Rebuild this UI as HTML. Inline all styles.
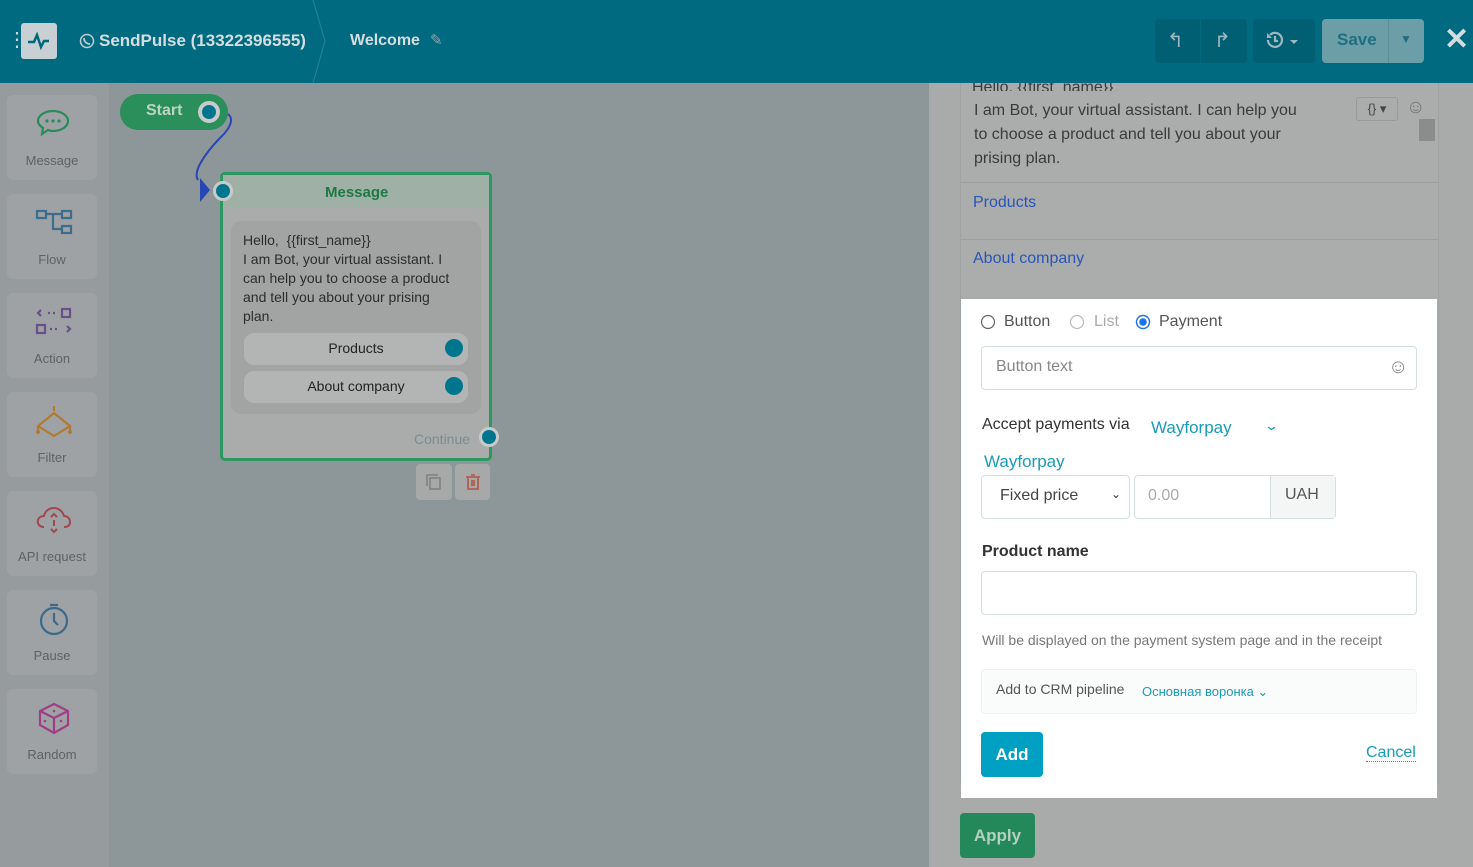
<!DOCTYPE html>
<html><head><meta charset="utf-8"><style>
*{box-sizing:border-box;margin:0;padding:0}
body{width:1473px;height:867px;overflow:hidden;font-family:"Liberation Sans",sans-serif;background:#8d9698;position:relative}
.hdr{position:absolute;left:0;top:0;width:1473px;height:83px;background:#006b80;color:#d6dfe2}
.abs{position:absolute}
.side{position:absolute;left:0;top:83px;width:109px;height:784px;background:#969b9e}
.card{position:absolute;left:7px;width:90px;height:85px;background:#9ea2a4;border-radius:6px;text-align:center;font-size:13px;color:#5d6365}
.card span{position:absolute;left:0;right:0;bottom:12px}
.card svg{position:absolute;left:27px;top:12px}
.rp{position:absolute;left:929px;top:83px;width:544px;height:784px;background:#a9abaa}
.node{position:absolute;left:220px;top:172px;width:272px;height:289px;border:3px solid #2a9860;border-radius:5px;background:#a9acab}
.dot{position:absolute;width:16px;height:16px;border-radius:50%;background:#00768e;border:3px solid #c8cbca}
.pill{position:absolute;left:244px;width:224px;height:32px;background:#b3b5b4;border-radius:10px;text-align:center;line-height:30px;font-size:14px;color:#222}
.white{position:absolute;left:961px;top:299px;width:476px;height:499px;background:#fff}
.inp{position:absolute;border:1px solid #d3dfe0;border-radius:4px;background:#fff}
.t{position:absolute;white-space:nowrap}
</style></head><body>
<div class="hdr">
 <div class="t" style="left:7px;top:30px;font-size:20px;line-height:20px;color:#cfd8db">⋮</div>
 <div class="abs" style="left:21px;top:23px;width:36px;height:36px;background:#c8d0d3;border-radius:3px">
  <svg width="36" height="36"><path d="M7 19h6l3-7 4 12 3-6h5" fill="none" stroke="#00687c" stroke-width="2.5"/></svg></div>
 <svg class="abs" style="left:79px;top:33px" width="16" height="16"><circle cx="8" cy="8" r="6.5" fill="none" stroke="#c2ccd0" stroke-width="1.5"/><path d="M5 5c0 4 3 6 6 6" stroke="#c2ccd0" stroke-width="1.8" fill="none"/></svg>
 <div class="t" style="left:99px;top:31px;font-size:17px;font-weight:bold;color:#d4dde0">SendPulse (13322396555)</div>
 <svg class="abs" style="left:310px;top:0" width="20" height="83"><path d="M3 0L15 41L3 83" fill="none" stroke="#2a8294" stroke-width="1"/></svg>
 <div class="t" style="left:350px;top:32px;font-size:16px;font-weight:bold;color:#d4dde0">Welcome</div>
 <div class="t" style="left:430px;top:31px;font-size:15px;color:#8aa8b0">✎</div>
 <div class="abs" style="left:1155px;top:19px;width:92px;height:44px;background:#005f72;border-radius:4px"></div>
 <div class="abs" style="left:1200px;top:19px;width:1px;height:44px;background:#006b80"></div>
 <div class="t" style="left:1167px;top:28px;font-size:20px;color:#9fb8bf">↰</div>
 <div class="t" style="left:1214px;top:28px;font-size:20px;color:#9fb8bf">↱</div>
 <div class="abs" style="left:1253px;top:19px;width:62px;height:44px;background:#005f72;border-radius:4px"></div>
 <svg class="abs" style="left:1264px;top:30px" width="40" height="20"><g fill="none" stroke="#9fb8bf" stroke-width="2.2"><path d="M4 10a7 7 0 1 0 2-5"/><path d="M11 6v5h3"/></g><path d="M3 3v5h5z" fill="#9fb8bf"/><path d="M26 10h8l-4 4z" fill="#9fb8bf"/></svg>
 <div class="abs" style="left:1322px;top:19px;width:102px;height:44px;background:#6c9ea8;border-radius:4px"></div>
 <div class="abs" style="left:1388px;top:19px;width:1px;height:44px;background:#5c8e98"></div>
 <div class="t" style="left:1337px;top:30px;font-size:17px;color:#1f6f80;font-weight:bold">Save</div>
 <div class="t" style="left:1400px;top:32px;font-size:12px;color:#1f6f80">▼</div>
 <div class="t" style="left:1444px;top:22px;font-size:30px;font-weight:bold;color:#d4dde0">✕</div>
</div>
<div class="side">
 <div class="card" style="top:12px"><svg width="38" height="34"><path d="M19 4c9 0 15 5 15 10s-6 10-15 10c-2 0-3 0-5-1l-6 4 1-6c-3-2-5-4-5-7 0-5 6-10 15-10z" fill="none" stroke="#2a8a5a" stroke-width="2.2"/><circle cx="13" cy="14" r="1.6" fill="#2a8a5a"/><circle cx="19" cy="14" r="1.6" fill="#2a8a5a"/><circle cx="25" cy="14" r="1.6" fill="#2a8a5a"/></svg><span>Message</span></div>
 <div class="card" style="top:111px"><svg width="40" height="34"><g fill="none" stroke="#3d6d8c" stroke-width="2.2"><rect x="3" y="5" width="9" height="7"/><rect x="28" y="5" width="9" height="7"/><rect x="28" y="20" width="9" height="7"/><path d="M12 8h16M19 8v15h9"/></g></svg><span>Flow</span></div>
 <div class="card" style="top:210px"><svg width="40" height="34"><g fill="none" stroke="#6b4f8a" stroke-width="2.2"><rect x="28" y="4" width="8" height="8"/><rect x="3" y="20" width="8" height="8"/><path d="M7 5l-3 3 3 3M33 21l3 3-3 3M14 8h2M19 8h2M16 24h2M21 24h2"/></g></svg><span>Action</span></div>
 <div class="card" style="top:309px"><svg width="40" height="34"><g fill="none" stroke="#b07a35" stroke-width="2.2"><path d="M20 2v5M4 22l16-13 16 13-16 10zM4 22v5M36 22v5"/></g><circle cx="4" cy="28" r="2" fill="#b07a35"/><circle cx="36" cy="28" r="2" fill="#b07a35"/></svg><span>Filter</span></div>
 <div class="card" style="top:408px"><svg width="40" height="34"><g fill="none" stroke="#a0484e" stroke-width="2"><path d="M10 24c-5 0-7-4-6-7 1-3 4-4 6-4 1-5 5-8 10-8s9 4 10 8c3 0 6 2 6 6s-3 5-6 5"/><path d="M17 14l3-3 3 3M17 26l3 3 3-3M20 17v6"/></g></svg><span>API request</span></div>
 <div class="card" style="top:507px"><svg width="40" height="34"><g fill="none" stroke="#3d6a8a" stroke-width="2.2"><circle cx="20" cy="19" r="13"/><path d="M16 3h8M20 11v8l4 4"/></g></svg><span>Pause</span></div>
 <div class="card" style="top:606px"><svg width="40" height="34"><g fill="none" stroke="#a03d86" stroke-width="2.2"><path d="M20 3l14 7v14l-14 8-14-8V10zM6 10l14 7 14-7M20 17v15"/></g><circle cx="20" cy="10" r="1.3" fill="#a03d86"/><circle cx="11" cy="20" r="1.3" fill="#a03d86"/><circle cx="27" cy="20" r="1.3" fill="#a03d86"/></svg><span>Random</span></div>
</div>
<div class="abs" style="left:120px;top:94px;width:108px;height:36px;background:#2a8f5a;border-radius:18px"></div>
<div class="t" style="left:146px;top:102px;font-size:16px;font-weight:bold;color:#bcd4c5">Start</div>
<div class="dot" style="left:198px;top:101px;width:22px;height:22px;border-width:4px"></div>
<svg class="abs" style="left:190px;top:110px" width="50" height="95"><path d="M38 4c10 8-8 24-8 24S0 58 8 70" fill="none" stroke="#2847b6" stroke-width="2"/><path d="M10 68l10 12-10 12z" fill="#2847b6"/></svg>
<div class="node">
 <div class="abs" style="left:0;top:0;width:266px;height:32px;background:#9fb1a7"></div>
 <div class="t" style="left:102px;top:9px;font-size:15px;font-weight:bold;color:#1e7a44">Message</div>
 <div class="abs" style="left:8px;top:46px;width:250px;height:193px;background:#a1a4a3;border-radius:10px"></div>
 <div class="abs" style="left:20px;top:56px;font-size:14px;line-height:19px;color:#2b2d2d;width:216px">Hello,&nbsp; {{first_name}}<br>I am Bot, your virtual assistant. I can help you to choose a product and tell you about your prising plan.</div>
 <div class="t" style="left:191px;top:256px;font-size:14px;color:#7e8b90">Continue</div>
</div>
<div class="dot" style="left:213px;top:181px;width:20px;height:20px"></div>
<div class="pill" style="top:333px">Products</div>
<div class="pill" style="top:371px">About company</div>
<div class="dot" style="left:445px;top:339px;width:18px;height:18px;border:none;background:#00768e"></div>
<div class="dot" style="left:445px;top:377px;width:18px;height:18px;border:none;background:#00768e"></div>
<div class="dot" style="left:479px;top:427px;width:20px;height:20px"></div>
<div class="abs" style="left:416px;top:464px;width:36px;height:36px;background:#a6a9a8;border-radius:4px"></div>
<div class="abs" style="left:455px;top:464px;width:35px;height:36px;background:#a6a9a8;border-radius:4px"></div>
<svg class="abs" style="left:424px;top:472px" width="20" height="20"><g fill="none" stroke="#7b8285" stroke-width="1.6"><path d="M3 14V3h11"/><rect x="6" y="6" width="10" height="11"/></g></svg>
<svg class="abs" style="left:463px;top:472px" width="20" height="20"><path d="M3 5h14M8 3h4M5 5v12h10V5M9 8v6M11 8v6" fill="none" stroke="#b06050" stroke-width="1.8"/></svg>
<div class="rp">
 <div class="abs" style="left:31px;top:0;width:479px;height:700px;border:1px solid #9da3a3;border-top:none;background:#abadac"></div>
 <div class="abs" style="left:32px;top:99px;width:477px;height:1px;background:#98a0a0"></div>
 <div class="abs" style="left:32px;top:156px;width:477px;height:1px;background:#98a0a0"></div>
 <div class="t" style="left:43px;top:0px;font-size:16px;color:#3a3c3c;height:8px;overflow:hidden;line-height:10px">Hello, {{first_name}}</div>
 <div class="t" style="left:45px;top:16px;font-size:16px;line-height:24px;color:#3a3c3c;white-space:normal;width:325px">I am Bot, your virtual assistant. I can help you to choose a product and tell you about your prising plan.</div>
 <div class="abs" style="left:427px;top:14px;width:42px;height:24px;border:1px solid #999;border-radius:3px;font-size:13px;line-height:22px;text-align:center;color:#444">{} ▾</div>
 <div class="t" style="left:477px;top:14px;font-size:19px;color:#777">☺</div>
 <div class="abs" style="left:490px;top:36px;width:16px;height:22px;background:#8b8d8c"></div>
 <div class="t" style="left:44px;top:111px;font-size:16px;color:#2a55b8">Products</div>
 <div class="t" style="left:44px;top:167px;font-size:16px;color:#2a55b8">About company</div>
 <div class="abs" style="left:31px;top:730px;width:75px;height:45px;background:#24895a;border-radius:4px;color:#b5d0c0;font-weight:bold;font-size:17px;text-align:center;line-height:45px">Apply</div>
</div>
<div class="white">
 <svg class="abs" style="left:20px;top:15px" width="260" height="16"><circle cx="7" cy="8" r="6.5" fill="none" stroke="#666" stroke-width="1.2"/><circle cx="96" cy="8" r="6.5" fill="none" stroke="#bbb" stroke-width="1.2"/><circle cx="162" cy="8" r="6.5" fill="none" stroke="#1a73e8" stroke-width="1.4"/><circle cx="162" cy="8" r="3.8" fill="#1a73e8"/></svg>
 <div class="t" style="left:43px;top:14px;font-size:16px;color:#555">Button</div>
 <div class="t" style="left:133px;top:14px;font-size:16px;color:#aaa">List</div>
 <div class="t" style="left:198px;top:14px;font-size:16px;color:#555">Payment</div>
 <div class="inp" style="left:20px;top:47px;width:436px;height:44px"></div>
 <div class="t" style="left:35px;top:59px;font-size:16px;color:#888">Button text</div>
 <div class="t" style="left:427px;top:57px;font-size:20px;color:#888">☺</div>
 <div class="t" style="left:21px;top:117px;font-size:16px;color:#333">Accept payments via</div>
 <div class="t" style="left:190px;top:119px;font-size:17px;color:#1a9bb8">Wayforpay</div>
 <div class="t" style="left:305px;top:119px;font-size:13px;color:#1a9bb8;transform:scaleX(1.4)">⌄</div>
 <div class="t" style="left:23px;top:153px;font-size:17px;color:#1a9bb8">Wayforpay</div>
 <div class="inp" style="left:20px;top:176px;width:149px;height:44px"></div>
 <div class="t" style="left:39px;top:188px;font-size:16px;color:#444">Fixed price</div>
 <div class="t" style="left:150px;top:188px;font-size:12px;color:#333">⌄</div>
 <div class="inp" style="left:173px;top:176px;width:202px;height:44px"></div>
 <div class="abs" style="left:309px;top:177px;width:65px;height:42px;background:#f4f5f5;border-left:1px solid #d3dfe0"></div>
 <div class="t" style="left:187px;top:188px;font-size:16px;color:#aaa">0.00</div>
 <div class="t" style="left:324px;top:187px;font-size:16px;color:#555">UAH</div>
 <div class="t" style="left:21px;top:244px;font-size:16px;font-weight:bold;color:#333">Product name</div>
 <div class="inp" style="left:20px;top:272px;width:436px;height:44px"></div>
 <div class="t" style="left:21px;top:333px;font-size:14px;color:#777">Will be displayed on the payment system page and in the receipt</div>
 <div class="abs" style="left:20px;top:370px;width:436px;height:45px;background:#fafbfb;border:1px solid #f0f2f2;border-radius:4px"></div>
 <div class="t" style="left:35px;top:382px;font-size:14px;color:#555">Add to CRM pipeline</div>
 <div class="t" style="left:181px;top:385px;font-size:13px;color:#1a9bb8;font-family:'Liberation Sans','DejaVu Sans',sans-serif">Основная воронка ⌄</div>
 <div class="abs" style="left:20px;top:433px;width:62px;height:45px;background:#00a0c2;border-radius:4px;color:#fff;font-weight:bold;font-size:17px;text-align:center;line-height:45px">Add</div>
 <div class="t" style="left:405px;top:445px;font-size:16px;color:#1a9bb8;border-bottom:1px dotted #1a9bb8;line-height:17px">Cancel</div>
</div>
</body></html>
